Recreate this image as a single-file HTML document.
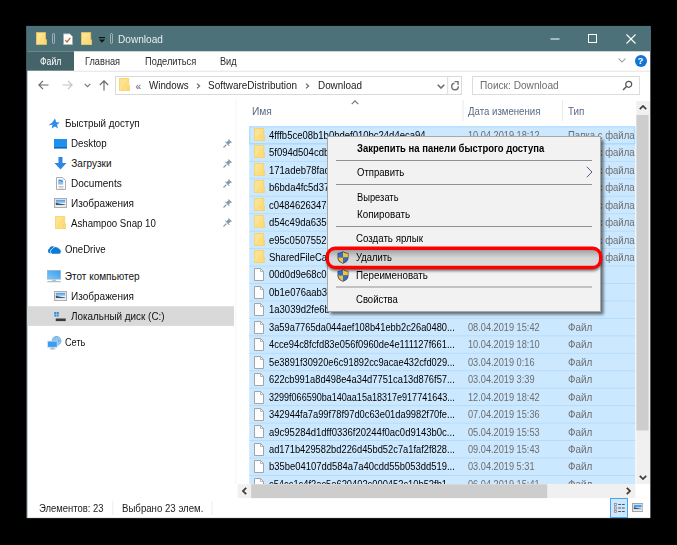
<!DOCTYPE html>
<html><head><meta charset="utf-8"><title>Download</title>
<style>
html,body{margin:0;padding:0;background:#000;}
body{width:677px;height:545px;position:relative;overflow:hidden;font-family:"Liberation Sans",sans-serif;}
.r{position:absolute;display:block;}
.t{position:absolute;white-space:nowrap;display:block;transform-origin:0 50%;}
</style></head><body>
<svg class="r" style="left:26px;top:26px;" width="625" height="493"><rect x="0.50" y="0.00" width="624.00" height="492.20" fill="#7b979c"/></svg>
<svg class="r" style="left:27px;top:30px;" width="624" height="488"><rect x="0.50" y="0.00" width="622.60" height="487.80" fill="#fff"/></svg>
<svg class="r" style="left:26px;top:25px;" width="625" height="27"><rect x="0.50" y="0.90" width="624.00" height="25.40" fill="#4d7179"/></svg>
<svg class="r" style="left:35.90px;top:32.00px" width="10.8" height="13" viewBox="0 0 11 13"><path d="M0.3 0.3H9.7V7.6H10.7V12.7H0.3Z" fill="#fcdd80" stroke="#f6cd58" stroke-width="0.7"/><path d="M8.9 8.2V12.4" stroke="#f3c94f" stroke-width="0.5"/><path d="M1 12L8.5 1H1Z" fill="#fde59b" opacity="0.55"/></svg>
<div class="r" style="left:52px;top:33.3px;width:3.2px;height:10.7px;border:0.8px solid rgba(235,242,244,0.5);border-radius:1.6px;box-sizing:border-box"></div>
<svg class="r" style="left:63px;top:32.8px" width="10" height="12.5" viewBox="0 0 11 13"><path d="M0.5 0.5H7.5L10.5 3.5V12.5H0.5Z" fill="#fff" stroke="#9aa" stroke-width="0.8"/><path d="M2.5 7.5L4.5 9.5L8 5" fill="none" stroke="#c8622a" stroke-width="1.4"/></svg>
<svg class="r" style="left:81.00px;top:32.20px" width="11" height="13.3" viewBox="0 0 11 13"><path d="M0.3 0.3H9.7V7.6H10.7V12.7H0.3Z" fill="#fcdd80" stroke="#f6cd58" stroke-width="0.7"/><path d="M8.9 8.2V12.4" stroke="#f3c94f" stroke-width="0.5"/><path d="M1 12L8.5 1H1Z" fill="#fde59b" opacity="0.55"/></svg>
<svg class="r" style="left:97.5px;top:36px" width="8" height="8" viewBox="0 0 8 8"><rect x="1" y="1" width="6" height="1.2" fill="#111"/><path d="M1 3.6H7L4 6.8Z" fill="#111"/></svg>
<div class="r" style="left:109.9px;top:33.3px;width:3.2px;height:10.7px;border:0.8px solid rgba(235,242,244,0.5);border-radius:1.6px;box-sizing:border-box"></div>
<span id="t0" class="t" style="left:117.70px;top:32.00px;font-size:10.5px;color:#e6edef;line-height:14px;transform:scaleX(0.9614);">Download</span>
<svg class="r" style="left:550px;top:38px;" width="10" height="2"><rect x="0.50" y="0.50" width="9.00" height="1.00" fill="#fff"/></svg>
<div class="r" style="left:588.4px;top:34.3px;width:6.6px;height:6.6px;border:1px solid #fff;box-sizing:content-box"></div>
<svg class="r" style="left:626px;top:34px" width="10" height="10" viewBox="0 0 10 10"><path d="M0.5 0.5L9.5 9.5M9.5 0.5L0.5 9.5" stroke="#fff" stroke-width="1.1" fill="none"/></svg>
<svg class="r" style="left:26px;top:51px;" width="48" height="20"><rect x="0.50" y="0.30" width="47.50" height="19.40" fill="#446469"/></svg>
<svg class="r" style="left:74px;top:70px;" width="576" height="2"><rect x="0.00" y="0.70" width="576.00" height="1.00" fill="#e2e3e4"/></svg>
<span id="t1" class="t" style="left:39.80px;top:55.40px;font-size:10.0px;color:#fff;line-height:14px;transform:scaleX(0.8661);">Файл</span>
<span id="t2" class="t" style="left:85.40px;top:55.40px;font-size:10.0px;color:#2b2b2b;line-height:14px;transform:scaleX(0.9222);">Главная</span>
<span id="t3" class="t" style="left:144.60px;top:55.40px;font-size:10.0px;color:#2b2b2b;line-height:14px;transform:scaleX(0.9288);">Поделиться</span>
<span id="t4" class="t" style="left:220.00px;top:55.40px;font-size:10.0px;color:#2b2b2b;line-height:14px;transform:scaleX(0.9174);">Вид</span>
<svg class="r" style="left:618.3px;top:58.3px" width="8" height="5.5" viewBox="0 0 9 6"><path d="M0.7 0.7L4.5 4.5L8.3 0.7" stroke="#9a9a9a" stroke-width="1.2" fill="none"/></svg>
<div class="r" style="left:634.5px;top:55px;width:12px;height:12px;border-radius:6px;background:#1174d6;color:#fff;font-size:9.5px;font-weight:bold;line-height:12px;text-align:center">?</div>
<svg class="r" style="left:38px;top:80px" width="11" height="10" viewBox="0 0 11 10"><path d="M5 0.8L0.9 5L5 9.2M1 5H10.5" stroke="#6b6b6b" stroke-width="1.2" fill="none"/></svg>
<svg class="r" style="left:62px;top:80px" width="11" height="10" viewBox="0 0 11 10"><path d="M6 0.8L10.1 5L6 9.2M10 5H0.5" stroke="#c4c4c4" stroke-width="1.2" fill="none"/></svg>
<svg class="r" style="left:84px;top:83px" width="7" height="5" viewBox="0 0 7 5"><path d="M0.7 0.8L3.5 3.6L6.3 0.8" stroke="#777" stroke-width="1.2" fill="none"/></svg>
<svg class="r" style="left:99px;top:79.5px" width="10" height="11" viewBox="0 0 10 11"><path d="M0.8 5L5 0.9L9.2 5M5 1V10.5" stroke="#6b6b6b" stroke-width="1.2" fill="none"/></svg>
<div class="r" style="left:115px;top:76px;width:347px;height:18.6px;border:1px solid #d9d9d9;box-sizing:border-box;background:#fff"></div>
<svg class="r" style="left:119.20px;top:78.00px" width="11" height="13.3" viewBox="0 0 11 13"><path d="M0.3 0.3H9.7V7.6H10.7V12.7H0.3Z" fill="#fcdd80" stroke="#f6cd58" stroke-width="0.7"/><path d="M8.9 8.2V12.4" stroke="#f3c94f" stroke-width="0.5"/><path d="M1 12L8.5 1H1Z" fill="#fde59b" opacity="0.55"/></svg>
<span id="t5" class="t" style="left:135.60px;top:79.60px;font-size:10.0px;color:#5a5a5a;line-height:14px;">«</span>
<span id="t6" class="t" style="left:148.90px;top:78.50px;font-size:10.0px;color:#1a1a1a;line-height:14px;transform:scaleX(0.9759);">Windows</span>
<svg class="r" style="left:196px;top:82.5px" width="5" height="6" viewBox="0 0 5 6"><path d="M1 0.6L3.6 3L1 5.4" stroke="#6a6a6a" stroke-width="1.25" fill="none"/></svg>
<span id="t7" class="t" style="left:208.30px;top:78.50px;font-size:10.0px;color:#1a1a1a;line-height:14px;transform:scaleX(0.9957);">SoftwareDistribution</span>
<svg class="r" style="left:305px;top:82.5px" width="5" height="6" viewBox="0 0 5 6"><path d="M1 0.6L3.6 3L1 5.4" stroke="#6a6a6a" stroke-width="1.25" fill="none"/></svg>
<span id="t8" class="t" style="left:317.50px;top:78.50px;font-size:10.0px;color:#1a1a1a;line-height:14px;transform:scaleX(0.9869);">Download</span>
<svg class="r" style="left:437.3px;top:84.2px" width="8" height="5" viewBox="0 0 8 5"><path d="M0.7 0.7L4 4L7.3 0.7" stroke="#6e6e6e" stroke-width="1.6" fill="none"/></svg>
<svg class="r" style="left:447px;top:76px;" width="2" height="18"><rect x="0.20" y="0.50" width="1.00" height="17.50" fill="#d9d9d9"/></svg>
<svg class="r" style="left:450.3px;top:80px" width="10" height="11" viewBox="0 0 10 11"><path d="M8.29 6.21A3.3 3.3 0 1 1 4.43 3.25" stroke="#707070" stroke-width="1.4" fill="none"/><path d="M4.6 1.6H8.1V4.9" stroke="#707070" stroke-width="1.3" fill="none"/></svg>
<div class="r" style="left:472px;top:76px;width:168px;height:18.6px;border:1px solid #dcdcdc;box-sizing:border-box;background:#fff"></div>
<span id="t9" class="t" style="left:479.70px;top:78.90px;font-size:10.0px;color:#6d6d6d;line-height:14px;transform:scaleX(1.0122);">Поиск: Download</span>
<svg class="r" style="left:622px;top:80px" width="11" height="11" viewBox="0 0 11 11"><circle cx="6.7" cy="4.3" r="3" stroke="#555" stroke-width="1.2" fill="none"/><path d="M4.5 6.5L1 10" stroke="#555" stroke-width="1.4"/></svg>
<svg class="r" style="left:235px;top:100px;" width="2" height="384"><rect x="0.40" y="0.00" width="1.00" height="384.00" fill="#f6f6f6"/></svg>
<svg class="r" style="left:27px;top:306px;" width="207" height="20"><rect x="0.50" y="0.20" width="206.50" height="19.70" fill="#d9d9d9"/></svg>
<span id="t10" class="t" style="left:64.80px;top:117.10px;font-size:10.0px;color:#111;line-height:14px;transform:scaleX(0.9835);">Быстрый доступ</span>
<svg class="r" style="left:48.1px;top:117.5px" width="12" height="12" viewBox="0 0 12 12"><path d="M7 0.5L8.3 4.2L11.8 4.4L9 6.8L10 10.6L7 8.4L3.6 10.6L4.6 6.8L0.5 7.2L4.2 4.6Z" fill="#2f8be6"/></svg>
<span id="t11" class="t" style="left:71.30px;top:137.30px;font-size:10.0px;color:#111;line-height:14px;transform:scaleX(0.9731);">Desktop</span>
<svg class="r" style="left:54.1px;top:138.7px" width="13" height="10" viewBox="0 0 13 10"><rect x="0" y="0" width="13" height="9" fill="#1e90f0"/><rect x="0" y="8" width="13" height="1.6" fill="#1565c0"/></svg>
<span id="t12" class="t" style="left:71.30px;top:157.10px;font-size:10.0px;color:#111;line-height:14px;">Загрузки</span>
<svg class="r" style="left:54.1px;top:157.0px" width="13" height="13" viewBox="0 0 13 13"><path d="M4.5 0H8.5V6H12.5L6.5 12.5L0.5 6H4.5Z" fill="#2f86e0"/></svg>
<span id="t13" class="t" style="left:71.30px;top:176.90px;font-size:10.0px;color:#111;line-height:14px;transform:scaleX(1.0024);">Documents</span>
<svg class="r" style="left:55.6px;top:176.8px" width="10" height="13" viewBox="0 0 10 13"><path d="M0.5 0.5H6.5L9.5 3.5V12.5H0.5Z" fill="#fff" stroke="#adadad" stroke-width="1"/><rect x="2.2" y="2.6" width="5" height="5" fill="#8ec0ec"/><path d="M3 3L6.5 4.5" stroke="#2f86d8" stroke-width="1.2"/><path d="M2.5 9.5H7.5M2.5 11H7.5" stroke="#aaa" stroke-width="0.7"/></svg>
<span id="t14" class="t" style="left:71.30px;top:196.70px;font-size:10.0px;color:#111;line-height:14px;transform:scaleX(1.0022);">Изображения</span>
<svg class="r" style="left:54.1px;top:197.9px" width="13" height="10" viewBox="0 0 13 10"><defs><linearGradient id="sk203" x1="0" y1="0" x2="0" y2="1"><stop offset="0" stop-color="#3f97e6"/><stop offset="1" stop-color="#b9dcf7"/></linearGradient></defs><rect x="0.6" y="0.6" width="11.8" height="8.8" fill="#fff" stroke="#a9a9a9" stroke-width="1.1"/><rect x="1.8" y="1.8" width="9.4" height="3.6" fill="url(#sk203)"/><path d="M1.8 7V4.6L5 5.6L11.2 6.6V7Z" fill="#3b5568"/><rect x="1.8" y="7" width="9.4" height="1.2" fill="#dfe7ea"/></svg>
<span id="t15" class="t" style="left:71.30px;top:216.60px;font-size:10.0px;color:#111;line-height:14px;transform:scaleX(0.9654);">Ashampoo Snap 10</span>
<svg class="r" style="left:55.30px;top:216.30px" width="11" height="13" viewBox="0 0 11 13"><path d="M0.3 0.3H9.7V7.6H10.7V12.7H0.3Z" fill="#fcdd80" stroke="#f6cd58" stroke-width="0.7"/><path d="M8.9 8.2V12.4" stroke="#f3c94f" stroke-width="0.5"/><path d="M1 12L8.5 1H1Z" fill="#fde59b" opacity="0.55"/></svg>
<span id="t16" class="t" style="left:64.80px;top:243.10px;font-size:10.0px;color:#111;line-height:14px;transform:scaleX(0.9609);">OneDrive</span>
<svg class="r" style="left:46.6px;top:244.9px" width="15" height="9.5" viewBox="0 0 15 9.5"><path d="M2.6 8.2A2.5 2.5 0 0 1 2.4 3.6A3.3 3.3 0 0 1 8 2.2L5 8.2Z" fill="#0d7ad6"/><path d="M5.6 9.2A2.7 2.7 0 0 1 5.2 4A3.8 3.8 0 0 1 12 3.6A2.9 2.9 0 0 1 12.2 9.2Z" fill="#0d7ad6" stroke="#fff" stroke-width="0.7"/></svg>
<span id="t17" class="t" style="left:64.80px;top:269.70px;font-size:10.0px;color:#111;line-height:14px;">Этот компьютер</span>
<svg class="r" style="left:47.0px;top:270.1px" width="14" height="13" viewBox="0 0 14 13"><defs><linearGradient id="pcg" x1="0" y1="1" x2="1" y2="0"><stop offset="0" stop-color="#7cc8f8"/><stop offset="1" stop-color="#3d9cef"/></linearGradient></defs><rect x="0.5" y="0.5" width="13" height="8.6" fill="url(#pcg)" stroke="#8fb4d0" stroke-width="0.8"/><rect x="5" y="9.4" width="4" height="1.6" fill="#b8c4cc"/><rect x="0.3" y="11.3" width="13.4" height="0.9" fill="#8ea5b5"/></svg>
<span id="t18" class="t" style="left:71.30px;top:289.60px;font-size:10.0px;color:#111;line-height:14px;transform:scaleX(1.0022);">Изображения</span>
<svg class="r" style="left:54.1px;top:290.8px" width="13" height="10" viewBox="0 0 13 10"><defs><linearGradient id="sk296" x1="0" y1="0" x2="0" y2="1"><stop offset="0" stop-color="#3f97e6"/><stop offset="1" stop-color="#b9dcf7"/></linearGradient></defs><rect x="0.6" y="0.6" width="11.8" height="8.8" fill="#fff" stroke="#a9a9a9" stroke-width="1.1"/><rect x="1.8" y="1.8" width="9.4" height="3.6" fill="url(#sk296)"/><path d="M1.8 7V4.6L5 5.6L11.2 6.6V7Z" fill="#3b5568"/><rect x="1.8" y="7" width="9.4" height="1.2" fill="#dfe7ea"/></svg>
<span id="t19" class="t" style="left:71.30px;top:309.70px;font-size:10.0px;color:#111;line-height:14px;transform:scaleX(0.9890);">Локальный диск (C:)</span>
<svg class="r" style="left:53.9px;top:311.6px" width="12.5" height="10" viewBox="0 0 12 10"><rect x="0" y="0" width="2" height="2" fill="#2a8be0"/><rect x="2.5" y="0" width="2" height="2" fill="#2a8be0"/><rect x="0" y="2.5" width="2" height="2" fill="#2a8be0"/><rect x="2.5" y="2.5" width="2" height="2" fill="#2a8be0"/><rect x="1.5" y="6.5" width="10" height="2.6" fill="#3a3a3a"/></svg>
<span id="t20" class="t" style="left:64.80px;top:336.40px;font-size:10.0px;color:#111;line-height:14px;transform:scaleX(0.9169);">Сеть</span>
<svg class="r" style="left:46.6px;top:335.8px" width="15" height="14" viewBox="0 0 15 14"><circle cx="9.5" cy="4.9" r="4.5" fill="#9ccdf2" stroke="#5b9fd8" stroke-width="0.7"/><path d="M9.5 0.5C7 3 7 7 9.5 9.4M9.5 0.5C12 3 12 7 9.5 9.4M5.2 4.9H13.8" stroke="#5b9fd8" stroke-width="0.6" fill="none"/><rect x="0.6" y="5.1" width="9.6" height="6.2" fill="#3c9cf0" stroke="#cfe5f8" stroke-width="0.8"/><rect x="4" y="11.6" width="3" height="1" fill="#9aa"/><rect x="2.6" y="12.5" width="5.8" height="0.9" fill="#aab"/></svg>
<svg class="r" style="left:222.7px;top:139.1px" width="9" height="9" viewBox="0 0 9 9"><g fill="#7d97ad"><path d="M5.7 0.2L8.8 3.3L7.9 4.2L4.8 1.1Z"/><path d="M5.2 1.6L7.4 3.8L5.6 5.6L3.4 3.4Z"/><path d="M2.6 2.2L6.8 6.4L5.9 6.9L2.1 3.1Z"/></g><path d="M3.4 5.6L0.5 8.5" stroke="#7d97ad" stroke-width="1.1"/></svg>
<svg class="r" style="left:222.7px;top:158.9px" width="9" height="9" viewBox="0 0 9 9"><g fill="#7d97ad"><path d="M5.7 0.2L8.8 3.3L7.9 4.2L4.8 1.1Z"/><path d="M5.2 1.6L7.4 3.8L5.6 5.6L3.4 3.4Z"/><path d="M2.6 2.2L6.8 6.4L5.9 6.9L2.1 3.1Z"/></g><path d="M3.4 5.6L0.5 8.5" stroke="#7d97ad" stroke-width="1.1"/></svg>
<svg class="r" style="left:222.7px;top:178.7px" width="9" height="9" viewBox="0 0 9 9"><g fill="#7d97ad"><path d="M5.7 0.2L8.8 3.3L7.9 4.2L4.8 1.1Z"/><path d="M5.2 1.6L7.4 3.8L5.6 5.6L3.4 3.4Z"/><path d="M2.6 2.2L6.8 6.4L5.9 6.9L2.1 3.1Z"/></g><path d="M3.4 5.6L0.5 8.5" stroke="#7d97ad" stroke-width="1.1"/></svg>
<svg class="r" style="left:222.7px;top:198.5px" width="9" height="9" viewBox="0 0 9 9"><g fill="#7d97ad"><path d="M5.7 0.2L8.8 3.3L7.9 4.2L4.8 1.1Z"/><path d="M5.2 1.6L7.4 3.8L5.6 5.6L3.4 3.4Z"/><path d="M2.6 2.2L6.8 6.4L5.9 6.9L2.1 3.1Z"/></g><path d="M3.4 5.6L0.5 8.5" stroke="#7d97ad" stroke-width="1.1"/></svg>
<svg class="r" style="left:222.7px;top:218.4px" width="9" height="9" viewBox="0 0 9 9"><g fill="#7d97ad"><path d="M5.7 0.2L8.8 3.3L7.9 4.2L4.8 1.1Z"/><path d="M5.2 1.6L7.4 3.8L5.6 5.6L3.4 3.4Z"/><path d="M2.6 2.2L6.8 6.4L5.9 6.9L2.1 3.1Z"/></g><path d="M3.4 5.6L0.5 8.5" stroke="#7d97ad" stroke-width="1.1"/></svg>
<span id="t21" class="t" style="left:251.50px;top:104.60px;font-size:10.0px;color:#5a6984;line-height:14px;transform:scaleX(1.0213);">Имя</span>
<span id="t22" class="t" style="left:468.40px;top:104.60px;font-size:10.0px;color:#5a6984;line-height:14px;transform:scaleX(0.9635);">Дата изменения</span>
<span id="t23" class="t" style="left:568.00px;top:104.60px;font-size:10.0px;color:#5a6984;line-height:14px;transform:scaleX(0.9837);">Тип</span>
<svg class="r" style="left:462px;top:100px;" width="2" height="21"><rect x="0.50" y="0.00" width="1.00" height="21.00" fill="#eaeaea"/></svg>
<svg class="r" style="left:562px;top:100px;" width="1" height="21"><rect x="0.00" y="0.00" width="1.00" height="21.00" fill="#eaeaea"/></svg>
<svg class="r" style="left:351px;top:100px" width="8" height="5" viewBox="0 0 8 5"><path d="M0.7 4.2L4 0.9L7.3 4.2" stroke="#777" stroke-width="1.2" fill="none"/></svg>
<svg class="r" style="left:249px;top:126px" width="388" height="359" viewBox="249 126 388 359"><rect x="249.2" y="126.45" width="386.09999999999997" height="357.85" fill="#cce8ff"/><rect x="249.2" y="143.45" width="386.09999999999997" height="0.9" fill="#b3dbfc"/><rect x="249.2" y="160.90" width="386.09999999999997" height="0.9" fill="#b3dbfc"/><rect x="249.2" y="178.35" width="386.09999999999997" height="0.9" fill="#b3dbfc"/><rect x="249.2" y="195.80" width="386.09999999999997" height="0.9" fill="#b3dbfc"/><rect x="249.2" y="213.25" width="386.09999999999997" height="0.9" fill="#b3dbfc"/><rect x="249.2" y="230.70" width="386.09999999999997" height="0.9" fill="#b3dbfc"/><rect x="249.2" y="248.15" width="386.09999999999997" height="0.9" fill="#b3dbfc"/><rect x="249.2" y="265.60" width="386.09999999999997" height="0.9" fill="#b3dbfc"/><rect x="249.2" y="283.05" width="386.09999999999997" height="0.9" fill="#b3dbfc"/><rect x="249.2" y="300.50" width="386.09999999999997" height="0.9" fill="#b3dbfc"/><rect x="249.2" y="317.95" width="386.09999999999997" height="0.9" fill="#b3dbfc"/><rect x="249.2" y="335.40" width="386.09999999999997" height="0.9" fill="#b3dbfc"/><rect x="249.2" y="352.85" width="386.09999999999997" height="0.9" fill="#b3dbfc"/><rect x="249.2" y="370.30" width="386.09999999999997" height="0.9" fill="#b3dbfc"/><rect x="249.2" y="387.75" width="386.09999999999997" height="0.9" fill="#b3dbfc"/><rect x="249.2" y="405.20" width="386.09999999999997" height="0.9" fill="#b3dbfc"/><rect x="249.2" y="422.65" width="386.09999999999997" height="0.9" fill="#b3dbfc"/><rect x="249.2" y="440.10" width="386.09999999999997" height="0.9" fill="#b3dbfc"/><rect x="249.2" y="457.55" width="386.09999999999997" height="0.9" fill="#b3dbfc"/><rect x="249.2" y="475.00" width="386.09999999999997" height="0.9" fill="#b3dbfc"/><rect x="249.7" y="126.85000000000001" width="385.09999999999997" height="16.95" fill="none" stroke="#a3d5ff" stroke-width="0.9"/></svg>
<div class="r" style="left:0;top:0;width:635.3px;height:484.3px;overflow:hidden">
<svg class="r" style="left:253.90px;top:127.98px" width="11" height="13" viewBox="0 0 11 13"><path d="M0.3 0.3H9.7V7.6H10.7V12.7H0.3Z" fill="#fcdd80" stroke="#f6cd58" stroke-width="0.7"/><path d="M8.9 8.2V12.4" stroke="#f3c94f" stroke-width="0.5"/><path d="M1 12L8.5 1H1Z" fill="#fde59b" opacity="0.55"/></svg>
<span id="t24" class="t" style="left:268.80px;top:128.88px;font-size:10.0px;color:#000;line-height:14px;transform:scaleX(0.9500);">4fffb5ce08b1b0bdef010bc24d4eca94</span>
<span id="t25" class="t" style="left:467.80px;top:128.88px;font-size:10.0px;color:#6d6d6d;line-height:14px;transform:scaleX(0.9200);">10.04.2019 18:12</span>
<span id="t26" class="t" style="left:567.50px;top:128.88px;font-size:10.0px;color:#6d6d6d;line-height:14px;transform:scaleX(0.9550);">Папка с файла</span>
<svg class="r" style="left:253.90px;top:145.42px" width="11" height="13" viewBox="0 0 11 13"><path d="M0.3 0.3H9.7V7.6H10.7V12.7H0.3Z" fill="#fcdd80" stroke="#f6cd58" stroke-width="0.7"/><path d="M8.9 8.2V12.4" stroke="#f3c94f" stroke-width="0.5"/><path d="M1 12L8.5 1H1Z" fill="#fde59b" opacity="0.55"/></svg>
<span id="t27" class="t" style="left:268.80px;top:146.32px;font-size:10.0px;color:#000;line-height:14px;transform:scaleX(0.9500);">5f094d504cdb</span>
<span id="t28" class="t" style="left:467.80px;top:146.32px;font-size:10.0px;color:#6d6d6d;line-height:14px;transform:scaleX(0.9200);">10.04.2019 18:12</span>
<span id="t29" class="t" style="left:567.50px;top:146.32px;font-size:10.0px;color:#6d6d6d;line-height:14px;transform:scaleX(0.9550);">Папка с файла</span>
<svg class="r" style="left:253.90px;top:162.87px" width="11" height="13" viewBox="0 0 11 13"><path d="M0.3 0.3H9.7V7.6H10.7V12.7H0.3Z" fill="#fcdd80" stroke="#f6cd58" stroke-width="0.7"/><path d="M8.9 8.2V12.4" stroke="#f3c94f" stroke-width="0.5"/><path d="M1 12L8.5 1H1Z" fill="#fde59b" opacity="0.55"/></svg>
<span id="t30" class="t" style="left:268.80px;top:163.77px;font-size:10.0px;color:#000;line-height:14px;transform:scaleX(0.9500);">171adeb78fac</span>
<span id="t31" class="t" style="left:467.80px;top:163.77px;font-size:10.0px;color:#6d6d6d;line-height:14px;transform:scaleX(0.9200);">10.04.2019 18:12</span>
<span id="t32" class="t" style="left:567.50px;top:163.77px;font-size:10.0px;color:#6d6d6d;line-height:14px;transform:scaleX(0.9550);">Папка с файла</span>
<svg class="r" style="left:253.90px;top:180.32px" width="11" height="13" viewBox="0 0 11 13"><path d="M0.3 0.3H9.7V7.6H10.7V12.7H0.3Z" fill="#fcdd80" stroke="#f6cd58" stroke-width="0.7"/><path d="M8.9 8.2V12.4" stroke="#f3c94f" stroke-width="0.5"/><path d="M1 12L8.5 1H1Z" fill="#fde59b" opacity="0.55"/></svg>
<span id="t33" class="t" style="left:268.80px;top:181.22px;font-size:10.0px;color:#000;line-height:14px;transform:scaleX(0.9500);">b6bda4fc5d37</span>
<span id="t34" class="t" style="left:467.80px;top:181.22px;font-size:10.0px;color:#6d6d6d;line-height:14px;transform:scaleX(0.9200);">10.04.2019 18:12</span>
<span id="t35" class="t" style="left:567.50px;top:181.22px;font-size:10.0px;color:#6d6d6d;line-height:14px;transform:scaleX(0.9550);">Папка с файла</span>
<svg class="r" style="left:253.90px;top:197.77px" width="11" height="13" viewBox="0 0 11 13"><path d="M0.3 0.3H9.7V7.6H10.7V12.7H0.3Z" fill="#fcdd80" stroke="#f6cd58" stroke-width="0.7"/><path d="M8.9 8.2V12.4" stroke="#f3c94f" stroke-width="0.5"/><path d="M1 12L8.5 1H1Z" fill="#fde59b" opacity="0.55"/></svg>
<span id="t36" class="t" style="left:268.80px;top:198.67px;font-size:10.0px;color:#000;line-height:14px;transform:scaleX(0.9500);">c04846263478</span>
<span id="t37" class="t" style="left:467.80px;top:198.67px;font-size:10.0px;color:#6d6d6d;line-height:14px;transform:scaleX(0.9200);">10.04.2019 18:12</span>
<span id="t38" class="t" style="left:567.50px;top:198.67px;font-size:10.0px;color:#6d6d6d;line-height:14px;transform:scaleX(0.9550);">Папка с файла</span>
<svg class="r" style="left:253.90px;top:215.22px" width="11" height="13" viewBox="0 0 11 13"><path d="M0.3 0.3H9.7V7.6H10.7V12.7H0.3Z" fill="#fcdd80" stroke="#f6cd58" stroke-width="0.7"/><path d="M8.9 8.2V12.4" stroke="#f3c94f" stroke-width="0.5"/><path d="M1 12L8.5 1H1Z" fill="#fde59b" opacity="0.55"/></svg>
<span id="t39" class="t" style="left:268.80px;top:216.12px;font-size:10.0px;color:#000;line-height:14px;transform:scaleX(0.9500);">d54c49da635c</span>
<span id="t40" class="t" style="left:467.80px;top:216.12px;font-size:10.0px;color:#6d6d6d;line-height:14px;transform:scaleX(0.9200);">10.04.2019 18:12</span>
<span id="t41" class="t" style="left:567.50px;top:216.12px;font-size:10.0px;color:#6d6d6d;line-height:14px;transform:scaleX(0.9550);">Папка с файла</span>
<svg class="r" style="left:253.90px;top:232.67px" width="11" height="13" viewBox="0 0 11 13"><path d="M0.3 0.3H9.7V7.6H10.7V12.7H0.3Z" fill="#fcdd80" stroke="#f6cd58" stroke-width="0.7"/><path d="M8.9 8.2V12.4" stroke="#f3c94f" stroke-width="0.5"/><path d="M1 12L8.5 1H1Z" fill="#fde59b" opacity="0.55"/></svg>
<span id="t42" class="t" style="left:268.80px;top:233.57px;font-size:10.0px;color:#000;line-height:14px;transform:scaleX(0.9500);">e95c05075525</span>
<span id="t43" class="t" style="left:467.80px;top:233.57px;font-size:10.0px;color:#6d6d6d;line-height:14px;transform:scaleX(0.9200);">10.04.2019 18:12</span>
<span id="t44" class="t" style="left:567.50px;top:233.57px;font-size:10.0px;color:#6d6d6d;line-height:14px;transform:scaleX(0.9550);">Папка с файла</span>
<svg class="r" style="left:253.90px;top:250.12px" width="11" height="13" viewBox="0 0 11 13"><path d="M0.3 0.3H9.7V7.6H10.7V12.7H0.3Z" fill="#fcdd80" stroke="#f6cd58" stroke-width="0.7"/><path d="M8.9 8.2V12.4" stroke="#f3c94f" stroke-width="0.5"/><path d="M1 12L8.5 1H1Z" fill="#fde59b" opacity="0.55"/></svg>
<span id="t45" class="t" style="left:268.80px;top:251.03px;font-size:10.0px;color:#000;line-height:14px;transform:scaleX(0.9500);">SharedFileCache</span>
<span id="t46" class="t" style="left:467.80px;top:251.03px;font-size:10.0px;color:#6d6d6d;line-height:14px;transform:scaleX(0.9200);">10.04.2019 18:12</span>
<span id="t47" class="t" style="left:567.50px;top:251.03px;font-size:10.0px;color:#6d6d6d;line-height:14px;transform:scaleX(0.9550);">Папка с файла</span>
<svg class="r" style="left:254.30px;top:268.38px" width="10" height="13" viewBox="0 0 10 13"><path d="M0.5 0.5H6.5L9.5 3.5V12.5H0.5Z" fill="#fff" stroke="#9c9c9c" stroke-width="0.9"/><path d="M6.5 0.5V3.5H9.5" fill="none" stroke="#9c9c9c" stroke-width="0.7"/></svg>
<span id="t48" class="t" style="left:268.80px;top:268.48px;font-size:10.0px;color:#000;line-height:14px;transform:scaleX(0.9500);">00d0d9e68c09</span>
<svg class="r" style="left:254.30px;top:285.83px" width="10" height="13" viewBox="0 0 10 13"><path d="M0.5 0.5H6.5L9.5 3.5V12.5H0.5Z" fill="#fff" stroke="#9c9c9c" stroke-width="0.9"/><path d="M6.5 0.5V3.5H9.5" fill="none" stroke="#9c9c9c" stroke-width="0.7"/></svg>
<span id="t49" class="t" style="left:268.80px;top:285.93px;font-size:10.0px;color:#000;line-height:14px;transform:scaleX(0.9500);">0b1e076aab3f</span>
<svg class="r" style="left:254.30px;top:303.28px" width="10" height="13" viewBox="0 0 10 13"><path d="M0.5 0.5H6.5L9.5 3.5V12.5H0.5Z" fill="#fff" stroke="#9c9c9c" stroke-width="0.9"/><path d="M6.5 0.5V3.5H9.5" fill="none" stroke="#9c9c9c" stroke-width="0.7"/></svg>
<span id="t50" class="t" style="left:268.80px;top:303.38px;font-size:10.0px;color:#000;line-height:14px;transform:scaleX(0.9500);">1a3039d2fe6b</span>
<svg class="r" style="left:254.30px;top:320.73px" width="10" height="13" viewBox="0 0 10 13"><path d="M0.5 0.5H6.5L9.5 3.5V12.5H0.5Z" fill="#fff" stroke="#9c9c9c" stroke-width="0.9"/><path d="M6.5 0.5V3.5H9.5" fill="none" stroke="#9c9c9c" stroke-width="0.7"/></svg>
<span id="t51" class="t" style="left:268.80px;top:320.83px;font-size:10.0px;color:#000;line-height:14px;transform:scaleX(0.9306);">3a59a7765da044aef108b41ebb2c26a0480...</span>
<span id="t52" class="t" style="left:467.80px;top:320.83px;font-size:10.0px;color:#6d6d6d;line-height:14px;transform:scaleX(0.9200);">08.04.2019 15:42</span>
<span id="t53" class="t" style="left:567.50px;top:320.83px;font-size:10.0px;color:#6d6d6d;line-height:14px;transform:scaleX(0.9850);">Файл</span>
<svg class="r" style="left:254.30px;top:338.18px" width="10" height="13" viewBox="0 0 10 13"><path d="M0.5 0.5H6.5L9.5 3.5V12.5H0.5Z" fill="#fff" stroke="#9c9c9c" stroke-width="0.9"/><path d="M6.5 0.5V3.5H9.5" fill="none" stroke="#9c9c9c" stroke-width="0.7"/></svg>
<span id="t54" class="t" style="left:268.80px;top:338.28px;font-size:10.0px;color:#000;line-height:14px;transform:scaleX(0.9359);">4cce94c8fcfd83e056f0960de4e111127f661...</span>
<span id="t55" class="t" style="left:467.80px;top:338.28px;font-size:10.0px;color:#6d6d6d;line-height:14px;transform:scaleX(0.9200);">10.04.2019 18:10</span>
<span id="t56" class="t" style="left:567.50px;top:338.28px;font-size:10.0px;color:#6d6d6d;line-height:14px;transform:scaleX(0.9850);">Файл</span>
<svg class="r" style="left:254.30px;top:355.63px" width="10" height="13" viewBox="0 0 10 13"><path d="M0.5 0.5H6.5L9.5 3.5V12.5H0.5Z" fill="#fff" stroke="#9c9c9c" stroke-width="0.9"/><path d="M6.5 0.5V3.5H9.5" fill="none" stroke="#9c9c9c" stroke-width="0.7"/></svg>
<span id="t57" class="t" style="left:268.80px;top:355.73px;font-size:10.0px;color:#000;line-height:14px;transform:scaleX(0.9281);">5e3891f30920e6c91892cc9acae432cfd029...</span>
<span id="t58" class="t" style="left:467.80px;top:355.73px;font-size:10.0px;color:#6d6d6d;line-height:14px;transform:scaleX(0.9200);">03.04.2019 0:16</span>
<span id="t59" class="t" style="left:567.50px;top:355.73px;font-size:10.0px;color:#6d6d6d;line-height:14px;transform:scaleX(0.9850);">Файл</span>
<svg class="r" style="left:254.30px;top:373.08px" width="10" height="13" viewBox="0 0 10 13"><path d="M0.5 0.5H6.5L9.5 3.5V12.5H0.5Z" fill="#fff" stroke="#9c9c9c" stroke-width="0.9"/><path d="M6.5 0.5V3.5H9.5" fill="none" stroke="#9c9c9c" stroke-width="0.7"/></svg>
<span id="t60" class="t" style="left:268.80px;top:373.18px;font-size:10.0px;color:#000;line-height:14px;transform:scaleX(0.9332);">622cb991a8d498e4a34d7751ca13d876f57...</span>
<span id="t61" class="t" style="left:467.80px;top:373.18px;font-size:10.0px;color:#6d6d6d;line-height:14px;transform:scaleX(0.9200);">03.04.2019 3:39</span>
<span id="t62" class="t" style="left:567.50px;top:373.18px;font-size:10.0px;color:#6d6d6d;line-height:14px;transform:scaleX(0.9850);">Файл</span>
<svg class="r" style="left:254.30px;top:390.53px" width="10" height="13" viewBox="0 0 10 13"><path d="M0.5 0.5H6.5L9.5 3.5V12.5H0.5Z" fill="#fff" stroke="#9c9c9c" stroke-width="0.9"/><path d="M6.5 0.5V3.5H9.5" fill="none" stroke="#9c9c9c" stroke-width="0.7"/></svg>
<span id="t63" class="t" style="left:268.80px;top:390.63px;font-size:10.0px;color:#000;line-height:14px;transform:scaleX(0.9029);">3299f066590ba140aa15a18317e917741643...</span>
<span id="t64" class="t" style="left:467.80px;top:390.63px;font-size:10.0px;color:#6d6d6d;line-height:14px;transform:scaleX(0.9200);">12.04.2019 18:42</span>
<span id="t65" class="t" style="left:567.50px;top:390.63px;font-size:10.0px;color:#6d6d6d;line-height:14px;transform:scaleX(0.9850);">Файл</span>
<svg class="r" style="left:254.30px;top:407.98px" width="10" height="13" viewBox="0 0 10 13"><path d="M0.5 0.5H6.5L9.5 3.5V12.5H0.5Z" fill="#fff" stroke="#9c9c9c" stroke-width="0.9"/><path d="M6.5 0.5V3.5H9.5" fill="none" stroke="#9c9c9c" stroke-width="0.7"/></svg>
<span id="t66" class="t" style="left:268.80px;top:408.08px;font-size:10.0px;color:#000;line-height:14px;transform:scaleX(0.9307);">342944fa7a99f78f97d0c63e01da9982f70fe...</span>
<span id="t67" class="t" style="left:467.80px;top:408.08px;font-size:10.0px;color:#6d6d6d;line-height:14px;transform:scaleX(0.9200);">07.04.2019 15:36</span>
<span id="t68" class="t" style="left:567.50px;top:408.08px;font-size:10.0px;color:#6d6d6d;line-height:14px;transform:scaleX(0.9850);">Файл</span>
<svg class="r" style="left:254.30px;top:425.43px" width="10" height="13" viewBox="0 0 10 13"><path d="M0.5 0.5H6.5L9.5 3.5V12.5H0.5Z" fill="#fff" stroke="#9c9c9c" stroke-width="0.9"/><path d="M6.5 0.5V3.5H9.5" fill="none" stroke="#9c9c9c" stroke-width="0.7"/></svg>
<span id="t69" class="t" style="left:268.80px;top:425.53px;font-size:10.0px;color:#000;line-height:14px;transform:scaleX(0.9501);">a9c95284d1dff0336f20244f0ac0d9143b0c...</span>
<span id="t70" class="t" style="left:467.80px;top:425.53px;font-size:10.0px;color:#6d6d6d;line-height:14px;transform:scaleX(0.9200);">05.04.2019 15:53</span>
<span id="t71" class="t" style="left:567.50px;top:425.53px;font-size:10.0px;color:#6d6d6d;line-height:14px;transform:scaleX(0.9850);">Файл</span>
<svg class="r" style="left:254.30px;top:442.88px" width="10" height="13" viewBox="0 0 10 13"><path d="M0.5 0.5H6.5L9.5 3.5V12.5H0.5Z" fill="#fff" stroke="#9c9c9c" stroke-width="0.9"/><path d="M6.5 0.5V3.5H9.5" fill="none" stroke="#9c9c9c" stroke-width="0.7"/></svg>
<span id="t72" class="t" style="left:268.80px;top:442.98px;font-size:10.0px;color:#000;line-height:14px;transform:scaleX(0.9307);">ad171b429582bd226d45bd52c7a1faf2f828...</span>
<span id="t73" class="t" style="left:467.80px;top:442.98px;font-size:10.0px;color:#6d6d6d;line-height:14px;transform:scaleX(0.9200);">09.04.2019 15:43</span>
<span id="t74" class="t" style="left:567.50px;top:442.98px;font-size:10.0px;color:#6d6d6d;line-height:14px;transform:scaleX(0.9850);">Файл</span>
<svg class="r" style="left:254.30px;top:460.33px" width="10" height="13" viewBox="0 0 10 13"><path d="M0.5 0.5H6.5L9.5 3.5V12.5H0.5Z" fill="#fff" stroke="#9c9c9c" stroke-width="0.9"/><path d="M6.5 0.5V3.5H9.5" fill="none" stroke="#9c9c9c" stroke-width="0.7"/></svg>
<span id="t75" class="t" style="left:268.80px;top:460.43px;font-size:10.0px;color:#000;line-height:14px;transform:scaleX(0.9437);">b35be04107dd584a7a40cdd55b053dd519...</span>
<span id="t76" class="t" style="left:467.80px;top:460.43px;font-size:10.0px;color:#6d6d6d;line-height:14px;transform:scaleX(0.9200);">03.04.2019 5:31</span>
<span id="t77" class="t" style="left:567.50px;top:460.43px;font-size:10.0px;color:#6d6d6d;line-height:14px;transform:scaleX(0.9850);">Файл</span>
<svg class="r" style="left:254.30px;top:477.78px" width="10" height="13" viewBox="0 0 10 13"><path d="M0.5 0.5H6.5L9.5 3.5V12.5H0.5Z" fill="#fff" stroke="#9c9c9c" stroke-width="0.9"/><path d="M6.5 0.5V3.5H9.5" fill="none" stroke="#9c9c9c" stroke-width="0.7"/></svg>
<span id="t78" class="t" style="left:268.80px;top:477.88px;font-size:10.0px;color:#000;line-height:14px;transform:scaleX(0.9334);">c54cc1c4f2ac5e620402c000452c10b52fb1...</span>
<span id="t79" class="t" style="left:467.80px;top:477.88px;font-size:10.0px;color:#6d6d6d;line-height:14px;transform:scaleX(0.9200);">06.04.2019 15:41</span>
<span id="t80" class="t" style="left:567.50px;top:477.88px;font-size:10.0px;color:#6d6d6d;line-height:14px;transform:scaleX(0.9850);">Файл</span>
</div>
<svg class="r" style="left:636px;top:101px;" width="14" height="383"><rect x="0.30" y="0.00" width="13.70" height="383.00" fill="#f0f0f0"/></svg>
<svg class="r" style="left:636px;top:115px;" width="13" height="316"><rect x="0.40" y="0.00" width="12.10" height="315.50" fill="#cdcdcd"/></svg>
<svg class="r" style="left:638.6px;top:105px" width="8" height="5" viewBox="0 0 8 5"><path d="M0.8 4.2L4 1L7.2 4.2" stroke="#3a3a3a" stroke-width="1.7" fill="none"/></svg>
<svg class="r" style="left:638.6px;top:475px" width="8" height="5" viewBox="0 0 8 5"><path d="M0.8 0.8L4 4L7.2 0.8" stroke="#3a3a3a" stroke-width="1.7" fill="none"/></svg>
<svg class="r" style="left:237px;top:484px;" width="399" height="15"><rect x="0.70" y="0.30" width="397.70" height="13.80" fill="#f0f0f0"/></svg>
<svg class="r" style="left:251px;top:484px;" width="297" height="15"><rect x="0.20" y="0.30" width="296.00" height="13.80" fill="#cdcdcd"/></svg>
<svg class="r" style="left:241.5px;top:487px" width="5" height="8" viewBox="0 0 5 8"><path d="M4.2 0.8L1 4L4.2 7.2" stroke="#3a3a3a" stroke-width="1.7" fill="none"/></svg>
<svg class="r" style="left:626px;top:487px" width="5" height="8" viewBox="0 0 5 8"><path d="M0.8 0.8L4 4L0.8 7.2" stroke="#3a3a3a" stroke-width="1.7" fill="none"/></svg>
<span id="t81" class="t" style="left:39.20px;top:501.60px;font-size:10.0px;color:#1a1a1a;line-height:14px;transform:scaleX(0.9453);">Элементов: 23</span>
<span id="t82" class="t" style="left:121.80px;top:501.60px;font-size:10.0px;color:#1a1a1a;line-height:14px;transform:scaleX(0.9644);">Выбрано 23 элем.</span>
<svg class="r" style="left:112px;top:501px;" width="2" height="14"><rect x="0.20" y="0.00" width="1.00" height="14.00" fill="#eeeeee"/></svg>
<svg class="r" style="left:211px;top:501px;" width="2" height="14"><rect x="0.60" y="0.00" width="1.00" height="14.00" fill="#eeeeee"/></svg>
<div class="r" style="left:610px;top:498.3px;width:18px;height:19.6px;background:#cce8ff;border:1.2px solid #4ba3eb;box-sizing:border-box"></div>
<svg class="r" style="left:613.2px;top:502.9px" width="13.2" height="10.2" viewBox="0 0 12 11"><g fill="none" stroke="#7a7a7a" stroke-width="0.7"><rect x="0.4" y="0.4" width="2.4" height="2.4"/><rect x="0.4" y="4.2" width="2.4" height="2.4"/><rect x="0.4" y="8" width="2.4" height="2.4" stroke="#d9534f"/></g><path d="M4.5 1.6H7.5M8.5 1.6H11.5M4.5 5.4H7.5M8.5 5.4H11.5M4.5 9.2H7.5M8.5 9.2H11.5" stroke="#333" stroke-width="0.9"/></svg>
<svg class="r" style="left:631.5px;top:503px" width="11.5" height="9" viewBox="0 0 11.5 9"><rect x="0.6" y="0.6" width="10.3" height="7.8" fill="#fff" stroke="#a5a5a5" stroke-width="1.2"/><rect x="1.8" y="1.8" width="7.9" height="2.6" fill="#4a9fe8"/><path d="M1.8 6.4V4L5 5L9.7 5.8V6.4Z" fill="#3b5568"/><rect x="1.8" y="6.2" width="7.9" height="1" fill="#dfe7ea"/></svg>
<div class="r" style="left:327.3px;top:135.6px;width:274.2px;height:176.20000000000002px;background:#f2f2f2;border:1px solid #a8a8a8;box-sizing:border-box;box-shadow:2.5px 2.5px 3px rgba(0,0,0,0.55)"></div>
<svg class="r" style="left:336px;top:160px;" width="256" height="1"><rect x="0.00" y="0.00" width="256.00" height="1.00" fill="#919191"/></svg>
<svg class="r" style="left:336px;top:184px;" width="256" height="1"><rect x="0.00" y="0.00" width="256.00" height="1.00" fill="#919191"/></svg>
<svg class="r" style="left:336px;top:226px;" width="256" height="1"><rect x="0.00" y="0.00" width="256.00" height="1.00" fill="#919191"/></svg>
<svg class="r" style="left:336px;top:286px;" width="256" height="2"><rect x="0.00" y="0.50" width="256.00" height="1.00" fill="#919191"/></svg>
<span id="t83" class="t" style="left:356.50px;top:141.90px;font-size:10.0px;color:#000;line-height:14px;font-weight:bold;transform:scaleX(0.9460);">Закрепить на панели быстрого доступа</span>
<span id="t84" class="t" style="left:356.50px;top:166.30px;font-size:10.0px;color:#000;line-height:14px;transform:scaleX(0.9537);">Отправить</span>
<svg class="r" style="left:585.5px;top:166.2px" width="7" height="12" viewBox="0 0 7 12"><path d="M0.8 0.8L6 6L0.8 11.2" stroke="#555a7a" stroke-width="1" fill="none"/></svg>
<span id="t85" class="t" style="left:356.50px;top:190.60px;font-size:10.0px;color:#000;line-height:14px;transform:scaleX(0.9329);">Вырезать</span>
<span id="t86" class="t" style="left:356.50px;top:208.40px;font-size:10.0px;color:#000;line-height:14px;transform:scaleX(0.9862);">Копировать</span>
<span id="t87" class="t" style="left:356.10px;top:232.30px;font-size:10.0px;color:#000;line-height:14px;transform:scaleX(0.9720);">Создать ярлык</span>
<svg class="r" style="left:318px;top:240px" width="294" height="40" viewBox="318 240 294 40"><defs><filter id="bl" x="-5%" y="-40%" width="110%" height="180%"><feGaussianBlur stdDeviation="1.4"/></filter><linearGradient id="rg" x1="0" y1="0" x2="0" y2="1"><stop offset="0" stop-color="#8f8f8f"/><stop offset="0.22" stop-color="#b4b4b4"/><stop offset="0.5" stop-color="#d6d6d6"/><stop offset="1" stop-color="#dddddd"/></linearGradient></defs><rect x="326.6" y="250.2" width="275" height="20.6" rx="9" fill="#000" opacity="0.6" filter="url(#bl)"/><rect x="327.3" y="248.3" width="273.4" height="19.2" rx="8" fill="url(#rg)"/><rect x="327.3" y="248.3" width="273.4" height="19.2" rx="8" fill="none" stroke="#ff0000" stroke-width="3.4"/></svg>
<span id="t88" class="t" style="left:356.10px;top:250.70px;font-size:10.0px;color:#000;line-height:14px;transform:scaleX(0.9401);">Удалить</span>
<span id="t89" class="t" style="left:356.10px;top:268.90px;font-size:10.0px;color:#000;line-height:14px;transform:scaleX(0.9794);">Переименовать</span>
<span id="t90" class="t" style="left:356.10px;top:293.00px;font-size:10.0px;color:#000;line-height:14px;transform:scaleX(0.9540);">Свойства</span>
<svg class="r" style="left:336.5px;top:250.7px" width="12" height="13" viewBox="0 0 11.5 12.5"><path d="M5.75 0.3C4 1.6 2.2 1.9 0.5 1.9V6.5C0.5 9.5 3 11.3 5.75 12.3C8.5 11.3 11 9.5 11 6.5V1.9C9.3 1.9 7.5 1.6 5.75 0.3Z" fill="#3b3f52"/><path d="M5.75 0.9C4.2 1.9 2.7 2.3 1.1 2.4V6.2H5.75Z" fill="#2d6fd0"/><path d="M5.75 0.9C7.3 1.9 8.8 2.3 10.4 2.4V6.2H5.75Z" fill="#f5c23a"/><path d="M1.1 6.2H5.75V11.6C3.4 10.7 1.3 9.1 1.1 6.2Z" fill="#f5c23a"/><path d="M10.4 6.2H5.75V11.6C8.1 10.7 10.2 9.1 10.4 6.2Z" fill="#2d6fd0"/></svg>
<svg class="r" style="left:336.5px;top:268.8px" width="12" height="13" viewBox="0 0 11.5 12.5"><path d="M5.75 0.3C4 1.6 2.2 1.9 0.5 1.9V6.5C0.5 9.5 3 11.3 5.75 12.3C8.5 11.3 11 9.5 11 6.5V1.9C9.3 1.9 7.5 1.6 5.75 0.3Z" fill="#3b3f52"/><path d="M5.75 0.9C4.2 1.9 2.7 2.3 1.1 2.4V6.2H5.75Z" fill="#2d6fd0"/><path d="M5.75 0.9C7.3 1.9 8.8 2.3 10.4 2.4V6.2H5.75Z" fill="#f5c23a"/><path d="M1.1 6.2H5.75V11.6C3.4 10.7 1.3 9.1 1.1 6.2Z" fill="#f5c23a"/><path d="M10.4 6.2H5.75V11.6C8.1 10.7 10.2 9.1 10.4 6.2Z" fill="#2d6fd0"/></svg>
</body></html>
